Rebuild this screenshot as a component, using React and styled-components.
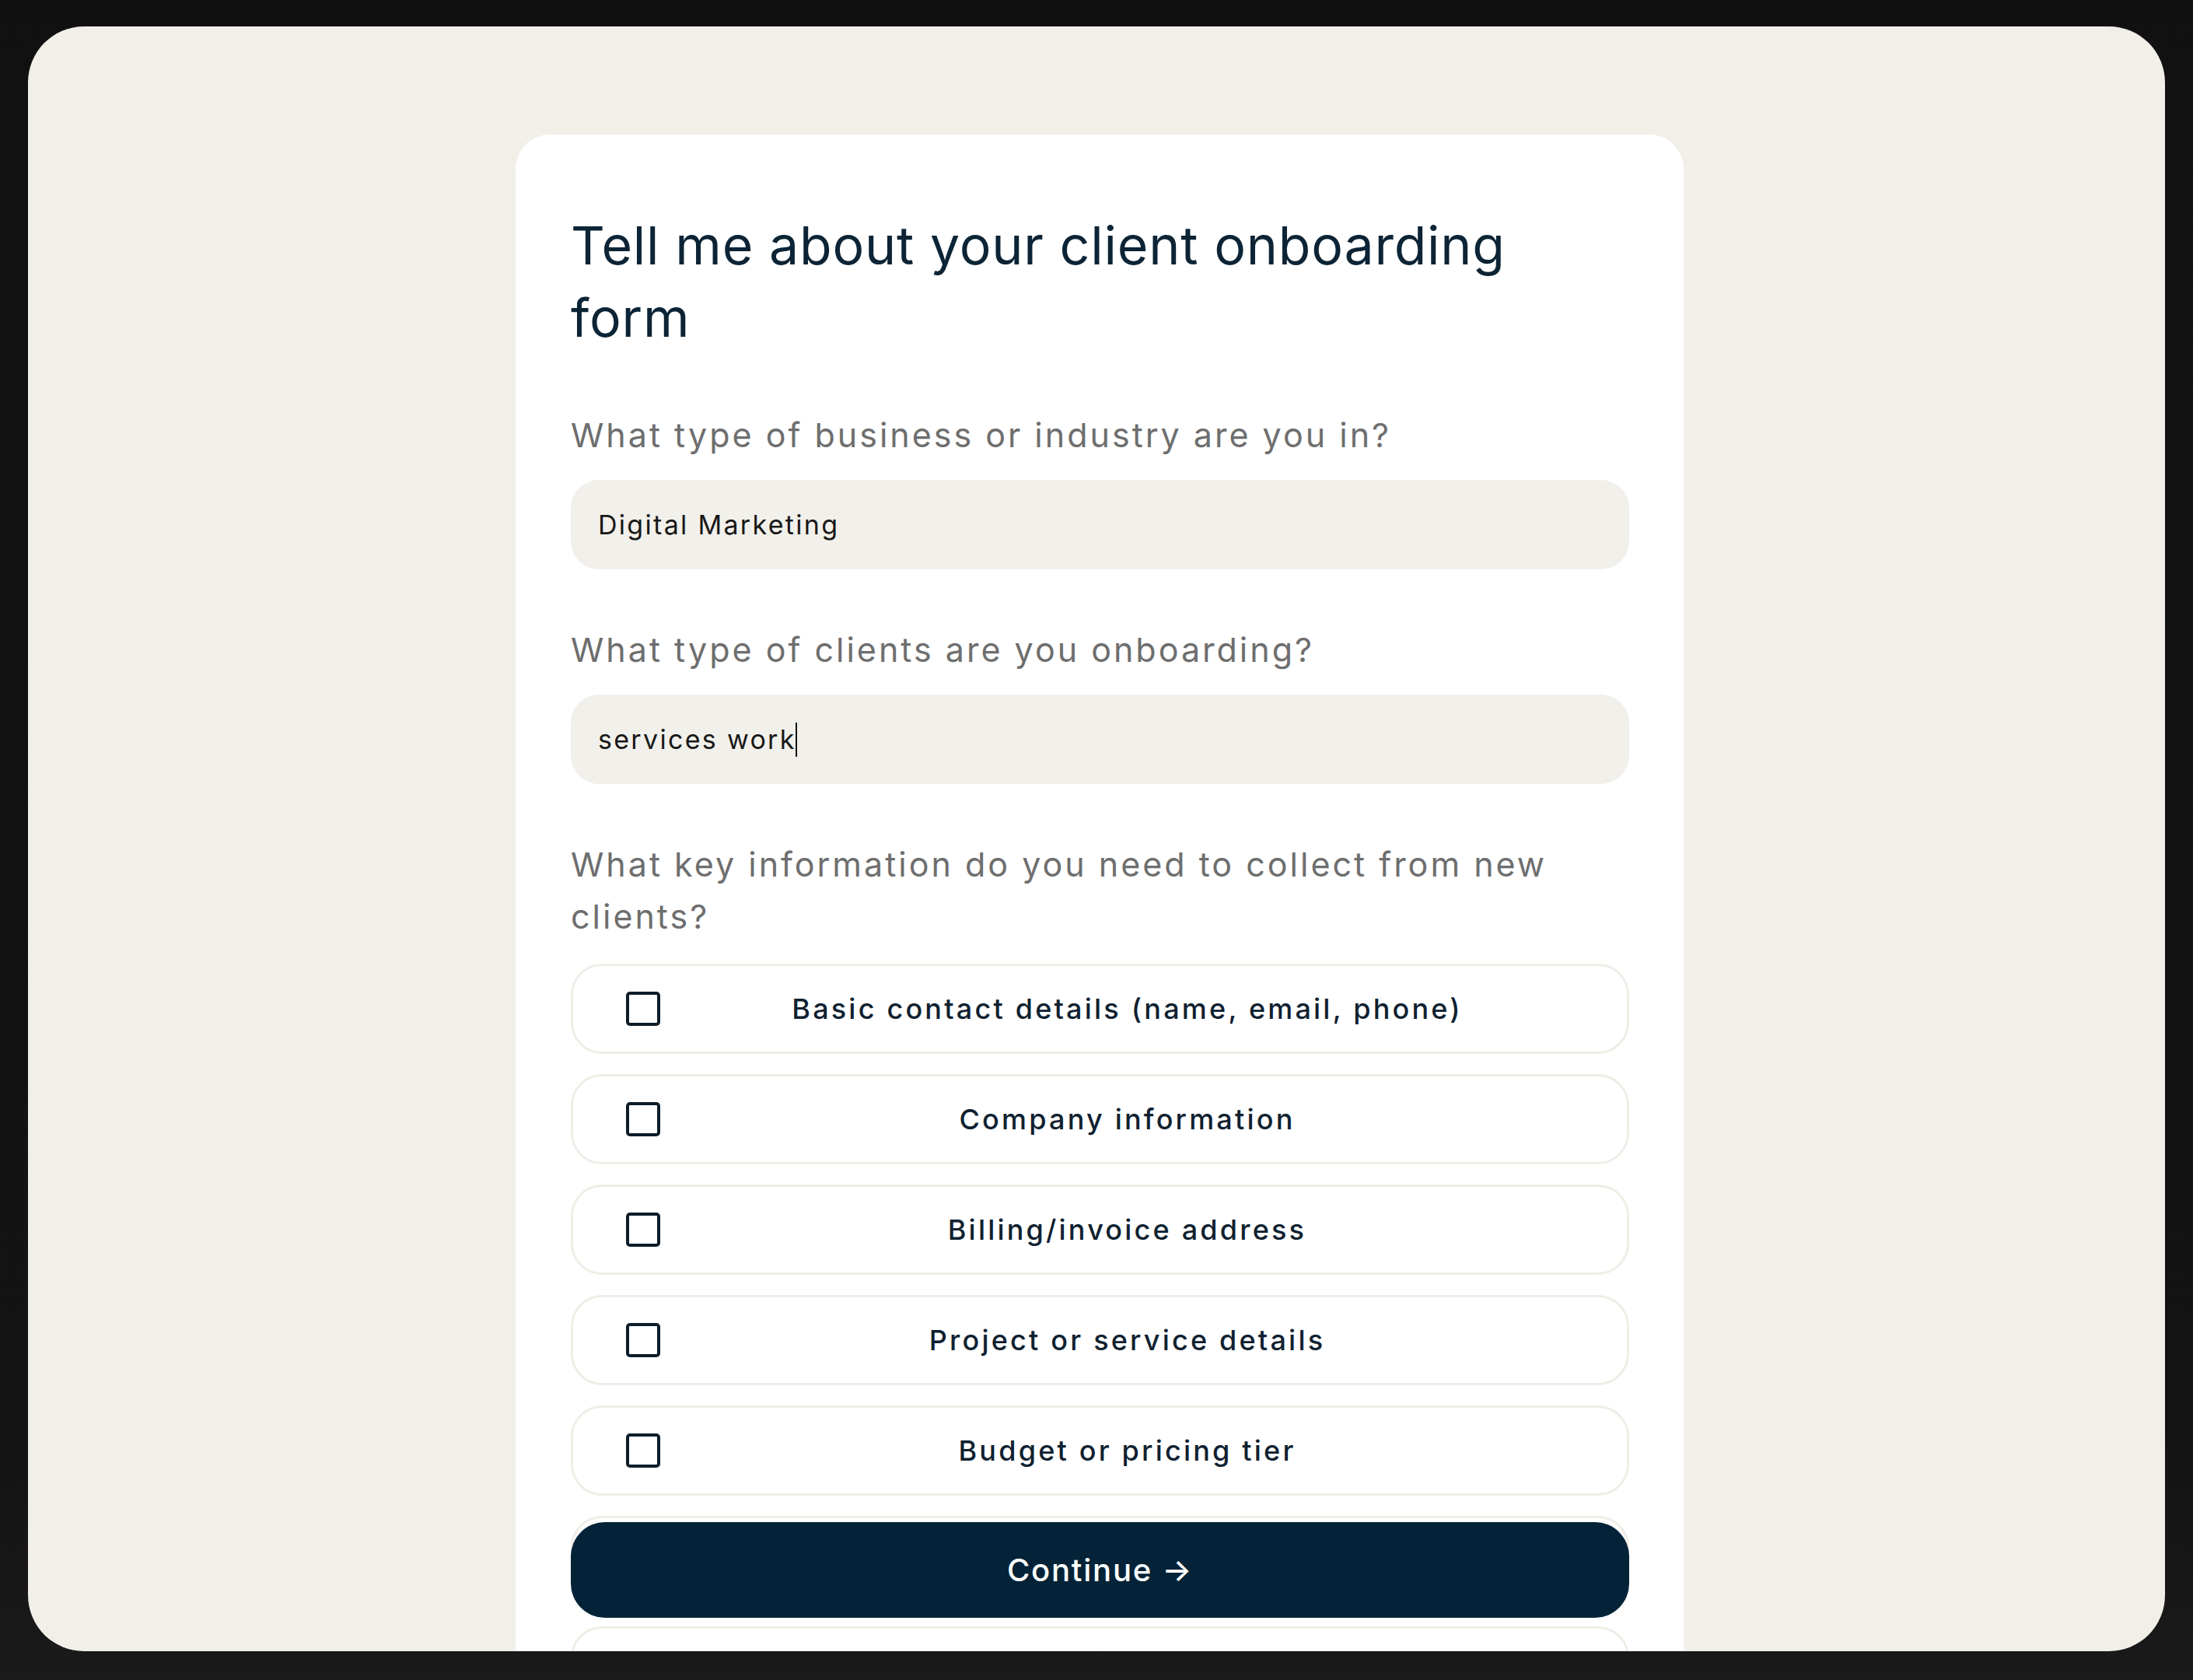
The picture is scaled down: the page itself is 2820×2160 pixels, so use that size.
import React from 'react';
import styled, { createGlobalStyle } from 'styled-components';

const GlobalStyle = createGlobalStyle`
*{
  box-sizing: border-box;
}
html, body{
  margin: 0;
  padding: 0;
  background: #121212;
  font-family: Inter, "Noto Sans", Arial, sans-serif;
}
`;

const Page = styled.div`
  height: 2160px;
  padding: 34px 36px 37px;
  background: linear-gradient(180deg, #111111 0%, #131313 85%, #1a1a1a 100%);
`;

const Panel = styled.main`
  height: 100%;
  background: #f1efe8;
  border-radius: 72px;
  overflow: hidden;
  padding: 139px 0 0 8px;
  display: flex;
  justify-content: center;
`;

const Card = styled.section`
  align-self: flex-start;
  width: 1502px;
  background: #ffffff;
  border-radius: 44px 44px 0 0;
  padding: 96px 70px 40px 71px;
`;

const Title = styled.h1`
  max-width: 1290px;
  margin: 0 0 71px;
  font-size: 68px;
  line-height: 93px;
  font-weight: 400;
  color: #0c2435;
  letter-spacing: 0.8px;
`;

const Field = styled.div`
  margin-bottom: 70px;
`;

const Label = styled.p`
  margin: 0 0 ${p => p.$gap || 24}px;
  font-size: 43px;
  line-height: 67px;
  color: #6e6e6e;
  font-weight: 400;
  letter-spacing: 3px;
`;

const Input = styled.div`
  height: 115px;
  border-radius: 36px;
  background: #f2f0ea;
  padding: 0 35px;
  display: flex;
  align-items: center;
  font-size: 34px;
  letter-spacing: 2.3px;
  color: #181818;
`;

const Caret = styled.span`
  display: inline-block;
  width: 2px;
  height: 44px;
  margin-left: -1px;
  background: #111;
`;

const Options = styled.div`
  display: flex;
  flex-direction: column;
  gap: 26px;
`;

const Option = styled.label`
  height: 116px;
  border: 3px solid #efede6;
  border-radius: 40px;
  background: #fff;
  display: flex;
  align-items: center;
  padding: 0 68px;
`;

const Box = styled.span`
  flex: none;
  width: 44px;
  height: 44px;
  border: 4px solid #0d1d29;
  border-radius: 5px;
`;

const OptionText = styled.span`
  flex: 1;
  margin-left: 26px;
  text-align: center;
  font-size: 36px;
  font-weight: 500;
  letter-spacing: 3.2px;
  color: #0f2130;
`;

const Continue = styled.button`
  position: sticky;
  bottom: 43px;
  display: flex;
  align-items: center;
  justify-content: center;
  gap: 12px;
  width: 100%;
  height: 123px;
  margin-top: 26px;
  border: none;
  border-radius: 44px;
  background: #042338;
  color: #ffffff;
  font-family: inherit;
  font-size: 40px;
  font-weight: 500;
  letter-spacing: 1.8px;
`;

const choices = [
  'Basic contact details (name, email, phone)',
  'Company information',
  'Billing/invoice address',
  'Project or service details',
  'Budget or pricing tier',
];

// rows further down the list sit under the sticky button
const moreRows = 2;

export default function App() {
  return (
    <Page>
      <GlobalStyle />
      <Panel>
        <Card>
          <Title>Tell me about your client onboarding form</Title>
          <Field>
            <Label>What type of business or industry are you in?</Label>
            <Input>Digital Marketing</Input>
          </Field>
          <Field>
            <Label>What type of clients are you onboarding?</Label>
            <Input>services work<Caret /></Input>
          </Field>
          <Label $gap={27}>What key information do you need to collect from new clients?</Label>
          <Options>
            {choices.map(c => (
              <Option key={c}>
                <Box />
                <OptionText>{c}</OptionText>
              </Option>
            ))}
            {Array.from({ length: moreRows }, (_, i) => (
              <Option key={'more' + i}>
                <Box />
              </Option>
            ))}
          </Options>
          <Continue>
            Continue <span>→</span>
          </Continue>
        </Card>
      </Panel>
    </Page>
  );
}
